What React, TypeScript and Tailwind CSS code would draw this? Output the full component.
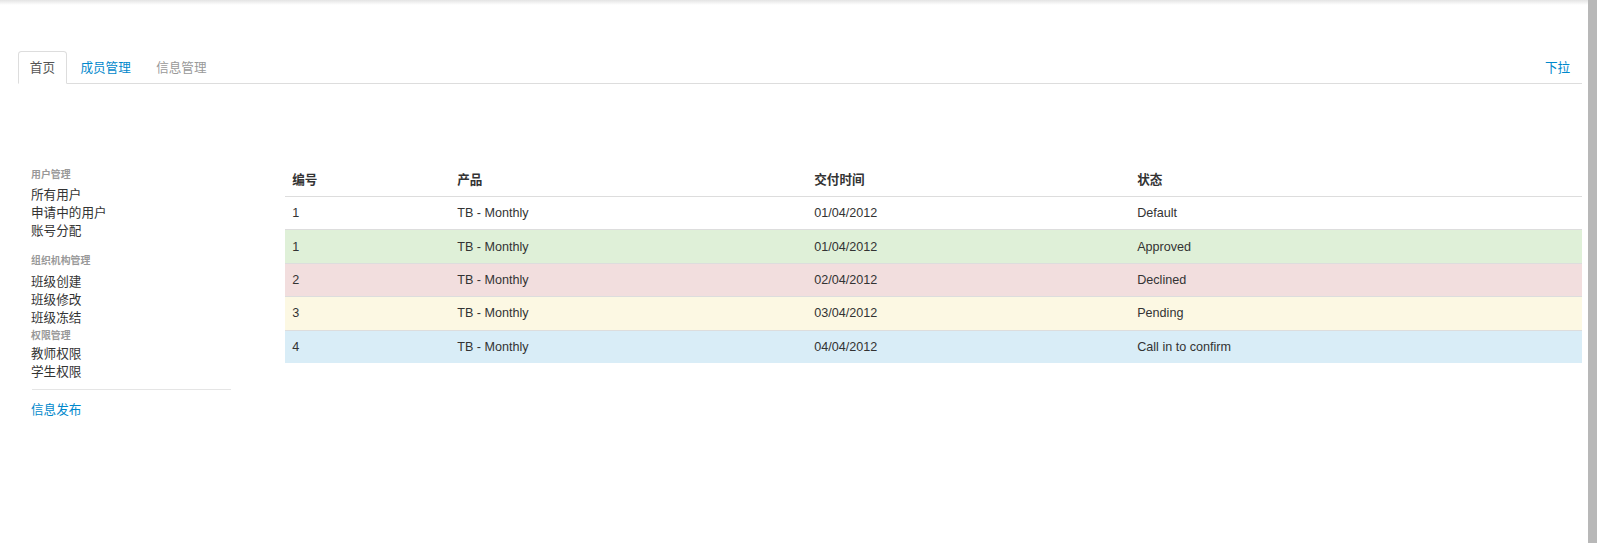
import React from "react";

interface Row {
	id: string;
	product: string;
	date: string;
	status: string;
	tone: string;
}

const rows: Row[] = [
	{ id: "1", product: "TB - Monthly", date: "01/04/2012", status: "Default", tone: "bg-white" },
	{ id: "1", product: "TB - Monthly", date: "01/04/2012", status: "Approved", tone: "bg-[#dff0d8]" },
	{ id: "2", product: "TB - Monthly", date: "02/04/2012", status: "Declined", tone: "bg-[#f2dede]" },
	{ id: "3", product: "TB - Monthly", date: "03/04/2012", status: "Pending", tone: "bg-[#fcf8e3]" },
	{ id: "4", product: "TB - Monthly", date: "04/04/2012", status: "Call in to confirm", tone: "bg-[#d9edf7]" },
];

const NavHeader = ({ children, className = "" }: { children: React.ReactNode; className?: string }) => (
	<li className={`text-[9.9px] font-bold leading-[18px] text-[#999] ${className}`}>{children}</li>
);

const NavItem = ({ children }: { children: React.ReactNode }) => (
	<li className="leading-[18px] text-[#333]">
		<a href="#">{children}</a>
	</li>
);

const Sidebar = () => (
	<aside className="w-[267px] flex-shrink-0 pl-[13px]">
		<div className="w-[200px]">
			<ul className="mb-[9px]">
				<NavHeader className="pt-[2.7px] pb-[2px]">用户管理</NavHeader>
				<NavItem>所有用户</NavItem>
				<NavItem>申请中的用户</NavItem>
				<NavItem>账号分配</NavItem>
			</ul>
			<ul>
				<NavHeader className="pt-[2.7px] pb-[2.7px]">组织机构管理</NavHeader>
				<NavItem>班级创建</NavItem>
				<NavItem>班级修改</NavItem>
				<NavItem>班级冻结</NavItem>
				<NavHeader className="pt-[0.5px]">权限管理</NavHeader>
				<NavItem>教师权限</NavItem>
				<NavItem>学生权限</NavItem>
			</ul>
			<div className="mt-[8px] mb-[9px] ml-px h-px w-[199px] bg-[#e5e5e5]"></div>
			<a href="#" className="block pt-[1.5px] leading-[18px] text-[#0088cc]">
				信息发布
			</a>
		</div>
	</aside>
);

const App = () => {
	return (
		<div className="flex h-[543px] w-full overflow-hidden bg-white font-['Liberation_Sans','Noto_Sans_CJK_SC',sans-serif] text-[12.6px] text-[#333]">
			<div className="min-w-0 flex-1">
				<div className="h-[5px] bg-gradient-to-b from-[#e4e4e4] to-white"></div>
				<div className="pl-[18px] pr-[6px] pt-[46px]">
					<ul className="flex items-end border-b border-[#ddd]">
						<li className="-mb-px mr-[1.8px]">
							<a
								href="#"
								className="block rounded-t-[3.6px] border border-[#ddd] border-b-transparent bg-white px-[10.8px] py-[6.5px] leading-[18px] text-[#555]"
							>
								首页
							</a>
						</li>
						<li className="-mb-px mr-[1.8px]">
							<a href="#" className="block border border-transparent px-[10.8px] py-[6.5px] leading-[18px] text-[#0088cc]">
								成员管理
							</a>
						</li>
						<li className="-mb-px mr-[1.8px]">
							<span className="block border border-transparent px-[10.8px] py-[6.5px] leading-[18px] text-[#999]">
								信息管理
							</span>
						</li>
						<li className="-mb-px ml-auto">
							<a href="#" className="block border border-transparent px-[10.8px] py-[6.5px] leading-[18px] text-[#0088cc]">
								下拉
							</a>
						</li>
					</ul>

					<div className="mt-[79.7px] flex">
						<Sidebar />
						<div className="min-w-0 flex-1">
							<table className="w-full table-fixed border-collapse">
								<colgroup>
									<col className="w-[165px]" />
									<col className="w-[357px]" />
									<col className="w-[323px]" />
									<col />
								</colgroup>
								<thead>
									<tr>
										<th className="px-[7.2px] py-[7.2px] text-left align-bottom font-bold leading-[18px]">编号</th>
										<th className="px-[7.2px] py-[7.2px] text-left align-bottom font-bold leading-[18px]">产品</th>
										<th className="px-[7.2px] py-[7.2px] text-left align-bottom font-bold leading-[18px]">交付时间</th>
										<th className="px-[7.2px] py-[7.2px] text-left align-bottom font-bold leading-[18px]">状态</th>
									</tr>
								</thead>
								<tbody>
									{rows.map((r, i) => (
										<tr key={i} className={r.tone}>
											<td className="border-t border-[#ddd] px-[7.2px] py-[7.2px] leading-[18px]">{r.id}</td>
											<td className="border-t border-[#ddd] px-[7.2px] py-[7.2px] leading-[18px]">{r.product}</td>
											<td className="border-t border-[#ddd] px-[7.2px] py-[7.2px] leading-[18px]">{r.date}</td>
											<td className="border-t border-[#ddd] px-[7.2px] py-[7.2px] leading-[18px]">{r.status}</td>
										</tr>
									))}
								</tbody>
							</table>
						</div>
					</div>
				</div>
			</div>
			<div className="w-[9px] flex-shrink-0 bg-[#b8b8b8]"></div>
		</div>
	);
};

export default App;
